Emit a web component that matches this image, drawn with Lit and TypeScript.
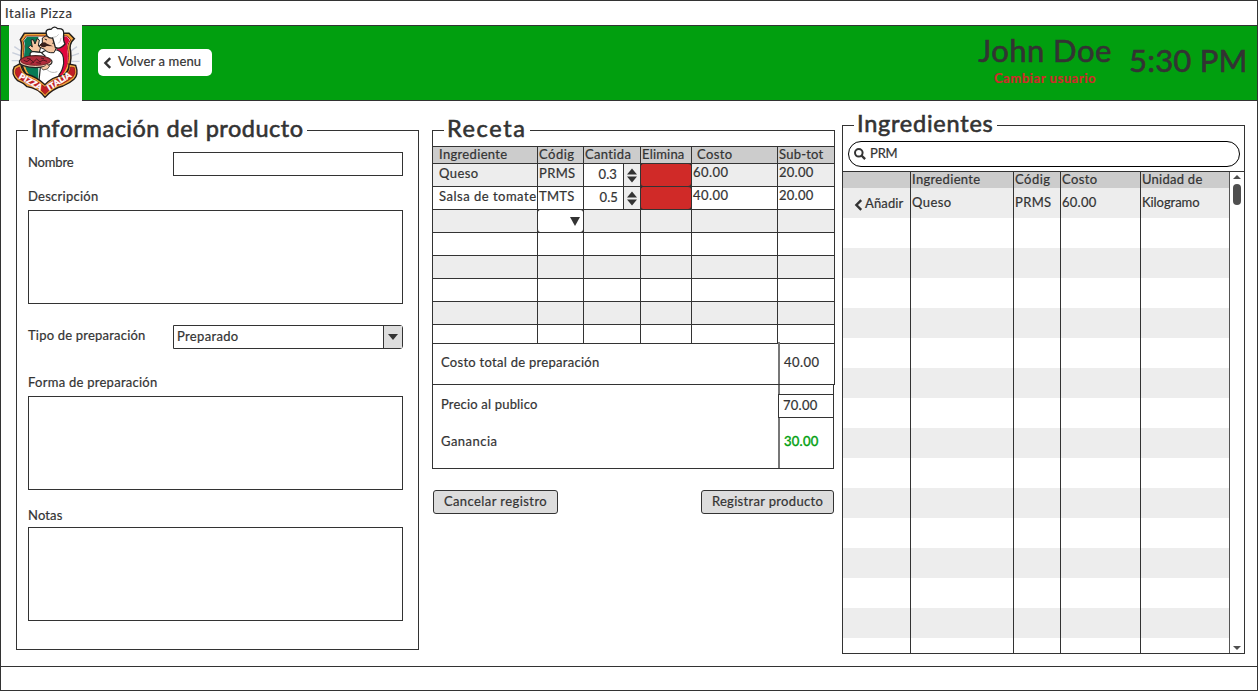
import { LitElement, html, css, svg, nothing } from "lit";
import { customElement } from "lit/decorators.js";

const FAMILY = `Lato, "Open Sans", sans-serif`;
const ctx = document.createElement("canvas").getContext("2d")!;

/** Text tracked so that it occupies the given width. */
function t(text: string, width: number, size = 13, weight = 400) {
  ctx.font = `${weight} ${size}px ${FAMILY}`;
  const gap = (width + 0.5 - ctx.measureText(text).width) / text.length;
  return html`<span class="t" style="letter-spacing:${gap.toFixed(3)}px">${text}</span>`;
}

const chevron = svg`<path d="M7.2 1.2 2.4 6l4.8 4.8" fill="none" stroke="#333" stroke-width="2.4"/>`;

@customElement("pizza-logo")
class PizzaLogo extends LitElement {
  static styles = css`
    :host { display: block; width: 73px; height: 76px; background: #f5f5f5; }
    svg { display: block; }
    text { font: 900 25px Lato, sans-serif; fill: #fff; stroke: #fff; stroke-width: 1; }
  `;
  render() {
    return html`<svg width="73" height="76" viewBox="12 9 219 228">
      <g stroke="#c9cfdb" stroke-width="4">
        <path d="M28 74l24 16M22 92l28 10M20 116h24M26 136l20-6M216 74l-20 14M222 94l-26 9M224 118h-24M218 138l-20-8"/>
      </g>
      <path d="M58 34H192L208 50Q190 66 197 90Q206 165 120 206Q41 165 49 90Q52 66 46 53Z" fill="#f0a53c" stroke="#26201c" stroke-width="4.5"/>
      <path d="M64 42H187L197 54Q183 70 190 92Q196 155 120 194Q50 155 56 92Q60 70 54 56Z" fill="#fff" stroke="#8b2417" stroke-width="3"/>
      <path d="M66 44H100V182Q50 150 58 92Q62 70 57 56Z" fill="#087a55"/>
      <path d="M160 44H186L194 55Q182 70 188 92Q194 150 146 184Z" fill="#e1063c"/>
      <path d="M110 92Q126 80 156 84Q178 90 176 124Q172 148 162 158L156 196L120 207L100 196L106 136Z" fill="#fff" stroke="#222" stroke-width="3.5"/>
      <path d="M78 106Q70 92 83 88L108 91L120 102L94 110Z" fill="#fff" stroke="#222" stroke-width="3.5"/>
      <path d="M81 88L70 76L76 70L82 75L78 54L85 53L90 66L96 50L103 54L100 72L108 72L103 90Z" fill="#f6c8a3" stroke="#222" stroke-width="3"/>
      <path d="M112 48Q128 34 148 48L158 70L147 92Q126 94 119 82L103 75Q101 69 112 64Z" fill="#f4c49f" stroke="#222" stroke-width="3"/>
      <path d="M104 70Q114 54 126 65L144 73L125 72Q114 80 104 70Z" fill="#3b211b"/>
      <path d="M119 51l7 3M142 64q7-4 7 5" stroke="#222" stroke-width="3" fill="none"/>
      <path d="M126 42Q117 20 138 22Q148 10 158 20Q179 18 176 38Q174 55 180 66Q164 84 151 76L143 48Q133 50 126 42Z" fill="#fff" stroke="#222" stroke-width="4"/>
      <path d="M144 46q12 0 17-9M160 64q7-4 8-16" stroke="#c8c8c8" stroke-width="3" fill="none"/>
      <path d="M28 134Q16 156 38 176Q54 182 66 194Q98 198 120 226Q144 199 174 192Q194 184 207 172Q222 158 212 130L192 126Q194 150 174 160Q140 165 120 188Q96 165 64 156Q50 146 47 124Z" fill="#f0a53c" stroke="#241b19" stroke-width="4"/>
      <path d="M33 140Q26 158 43 170Q60 180 74 188Q103 194 120 217Q140 194 172 185Q190 176 203 166Q214 154 208 137L197 135Q194 156 174 167Q140 172 120 196Q94 172 62 162Q47 154 43 135Z" fill="#c11f25" stroke="#8a1717" stroke-width="2"/>
      <ellipse cx="92" cy="119" rx="49" ry="18" fill="#e9c9b0" stroke="#222" stroke-width="3.5"/>
      <ellipse cx="92" cy="116" rx="45" ry="14" fill="#b02c3c" stroke="#7b2225" stroke-width="3"/>
      <path d="M56 115l10 4 9-7 10 8 10-9 10 9 9-6 12 4M66 109l11 2M94 122l14 2M77 124l10-3M108 108l9 2" fill="none" stroke="#53151d" stroke-width="3"/>
      <path d="M108 136q12-2 17-10l9 6q-4 12-20 12z" fill="#f6c8a3" stroke="#222" stroke-width="2"/>
      <path d="M126 143q14 13 31 6" fill="none" stroke="#bbb" stroke-width="3"/>
      <text transform="translate(40 168) rotate(30)" textLength="76" lengthAdjust="spacingAndGlyphs">PIZZA</text>
      <text transform="translate(133 206) rotate(-32)" textLength="80" lengthAdjust="spacingAndGlyphs">ITALIA</text>
    </svg>`;
  }
}

@customElement("app-root")
class AppRoot extends LitElement {
  static styles = css`
    :host { display: block; width: 1258px; height: 691px; font: 13px/16px Lato, "Open Sans", sans-serif; color: #333; }
    * { box-sizing: border-box; }
    .t { white-space: pre; -webkit-text-stroke: 0.2px currentColor; }
    svg { display: block; flex: none; }
    .frame { display: flex; flex-direction: column; height: 691px; border: 1px solid #333; background: #fff; }
    .titlebar { height: 24px; padding: 4px 0 0 4px; }
    .header { display: flex; align-items: flex-start; height: 76px; padding-left: 8px; background: #019f0f; border: solid #333; border-width: 1px 0; }
    .logo { margin-top: -1px; }
    .back { display: flex; align-items: center; gap: 6px; width: 114px; height: 27px; margin: 23px 0 0 16px; padding: 0 0 3px 5px; background: #fff; border-radius: 5px; }
    .back svg { margin-top: 3px; }
    .user { display: flex; flex-direction: column; align-items: center; margin: 6px 0 0 auto; width: 134px; }
    .big { font-size: 31px; line-height: 36px; }
    .big .t, .legend .t { -webkit-text-stroke-width: 0.6px; }
    .switch { margin-top: 2px; color: #d02a2a; font-weight: 700; }
    .clock { margin: 16px 10px 0 17px; width: 118px; }
    .main { display: flex; align-items: flex-start; height: 565px; padding-left: 15px; }
    .footer { height: 24px; border-top: 1px solid #333; }

    .panel { width: 403px; flex: none; display: flex; flex-direction: column; }
    .form { margin-top: 14px; height: 535px; }
    .recipe { margin: 14px 0 0 13px; }
    .stock { margin: 9px 0 0 7px; height: 544px; }
    .legend { display: flex; align-items: flex-end; height: 30px; flex: none; font-size: 23.5px; line-height: 30px; }
    .legend .t { padding: 0 3px 2px; }
    .corner { height: 15px; width: 12px; border: solid #333; border-width: 1px 0 0 1px; }
    .corner.end { flex: 1; border-width: 1px 1px 0 0; }
    .stock .legend { height: 31px; }
    .stock .legend .t { padding-bottom: 3px; }
    .stock .corner { height: 16px; }
    .body { flex: 1; border: solid #333; border-width: 0 1px 1px; }
    .form .body { padding: 7px 15px 0 11px; }

    .row { display: flex; justify-content: space-between; height: 24px; }
    .row .label { padding-top: 2px; }
    .label { height: 16px; }
    .input { width: 230px; height: 24px; border: 1px solid #333; }
    .area { height: 94px; border: 1px solid #333; }
    .select { display: flex; justify-content: space-between; padding: 2px 0 0 3px; border-radius: 0 3px 3px 0; }
    .arrow { display: flex; align-items: center; justify-content: center; width: 19px; height: 22px; margin-top: -2px; background: #ddd; border-left: 1px solid #333; }
    .g4 { margin-top: 4px; } .g6 { margin-top: 6px; } .g12 { margin-top: 12px; }
    .g17 { margin-top: 17px; } .g21 { margin-top: 21px; } .g25 { margin-top: 25px; }

    .spacer { height: 1px; border: solid #333; border-width: 0 1px; }
    .grid { display: grid; grid-template-columns: 105px 46px 57px 51px 86px 57px; grid-template-rows: 17px repeat(7, 23px) 19px; border-right: 1px solid #333; width: 403px; background: #333; }
    .cell { border: solid #333; border-width: 1px 0 0 1px; padding: 1px 0 0 1px; overflow: hidden; background: #fff; }
    .cell.num { padding-top: 0; }
    .cell.first { padding-left: 6px; }
    .cell.pad { padding-left: 5px; }
    .cell.head { background: #ccc; line-height: 14px; padding-top: 0; }
    .cell.odd { background: #ededed; }
    .cell.pick { display: flex; justify-content: flex-end; align-items: center; padding: 0 3px 0 0; background: #fff; border-radius: 3px; }
    .cell.delete { background: #d02a28; border-radius: 3px; }
    .cell.qty { display: flex; justify-content: flex-end; padding: 0; background: #fff; }
    .qty .t { padding: 2px 6px 0 0; }
    .cell.qty.second .t { padding: 2px 5px 0 0; }
    .spin { display: flex; align-items: center; justify-content: center; width: 17px; background: #ededed; border-left: 1px solid #333; }

    .total { display: flex; width: 403px; height: 42px; border: 1px solid #333; }
    .total .name { width: 345px; padding: 10px 0 0 8px; }
    .total .value { flex: 1; margin-top: -2px; padding: 12px 0 0 4px; border-left: 2px solid #777; }
    .profit { display: flex; width: 402px; height: 84px; border: solid #333; border-width: 0 1px 1px; }
    .profit .names { display: flex; flex-direction: column; gap: 21px; width: 345px; padding: 11px 0 0 8px; }
    .profit .values { flex: 1; border-left: 2px solid #777; padding-top: 9px; }
    .price { height: 24px; margin: 0 -1px 0 -2px; padding: 2px 0 0 4px; border: 1px solid #333; background: #fff; }
    .gain { padding: 15px 0 0 4px; color: #019f0f; }
    .gain .t { -webkit-text-stroke-width: 0.4px; }
    .actions { display: flex; justify-content: space-between; width: 401px; margin: 21px 0 0 1px; }
    .button { display: flex; justify-content: center; width: 125px; height: 24px; padding-top: 2px; border: 1px solid #333; border-radius: 3px; background: #ddd; }
    .button.wide { width: 133px; }

    .stock .body { display: flex; flex-direction: column; overflow: hidden; }
    .search { display: flex; gap: 4px; height: 26px; flex: none; margin: 0 4px 4px 5px; padding: 3px 0 0 5px; border: 1.4px solid #000; border-radius: 13px; }
    .search svg { margin-top: 3px; }
    .listing { display: flex; flex: 1; min-height: 0; border-top: 1px solid #333; }
    .rows { width: 386px; overflow: hidden; }
    .line { display: grid; grid-template-columns: 67px 103px 47px 80px 89px; height: 30px; }
    .line.odd { background: #ededed; }
    .line.head { background: #ccc; height: 16px; line-height: 14px; }
    .line .c { border-left: 1px solid #333; padding: 6px 0 0 1px; }
    .line.head .c { padding-top: 0; }
    .line .c.act { display: flex; border: 0; gap: 2px; padding: 7px 0 0 11px; }
    .act svg { margin-top: 4px; }
    .scroll { display: flex; flex-direction: column; align-items: center; flex: 1; border-left: 1px solid #555; padding: 3px 0; }
    .thumb { width: 8px; height: 21px; margin: 5px 0 auto; border-radius: 4px; background: #4f4f4f; }
  `;

  private legend(text: string, width: number) {
    return html`<div class="legend"><div class="corner"></div>${t(text, width, 23.5)}<div class="corner end"></div></div>`;
  }

  private quantity(value: string, second = false) {
    return html`<div class="cell qty ${second ? "second" : ""}">${t(value, 18)}
      <div class="spin"><svg width="10" height="15" viewBox="0 0 10 15"><path d="M0 6.5 5 .5l5 6zM0 8.5l5 6 5-6z" fill="#333"/></svg></div></div>`;
  }

  private recipe() {
    const blanks = [0, 1, 2, 3, 4, 5];
    return html`<div class="grid">
      <div class="cell head first">${t("Ingrediente", 68)}</div>
      <div class="cell head">${t("Códig", 35)}</div>
      <div class="cell head">${t("Cantida", 46)}</div>
      <div class="cell head">${t("Elimina", 42)}</div>
      <div class="cell head pad">${t("Costo", 35)}</div>
      <div class="cell head">${t("Sub-tot", 44)}</div>
      <div class="cell odd first">${t("Queso", 39)}</div>
      <div class="cell odd">${t("PRMS", 36)}</div>
      ${this.quantity("0.3")}
      <div class="cell delete"></div>
      <div class="cell odd num">${t("60.00", 35)}</div>
      <div class="cell odd num">${t("20.00", 34)}</div>
      <div class="cell first">${t("Salsa de tomate", 97)}</div>
      <div class="cell">${t("TMTS", 35)}</div>
      ${this.quantity("0.5", true)}
      <div class="cell delete"></div>
      <div class="cell num">${t("40.00", 35)}</div>
      <div class="cell num">${t("20.00", 34)}</div>
      ${blanks.map((r) => blanks.map((c) => r === 0 && c === 1
        ? html`<div class="cell pick"><svg width="10" height="9" viewBox="0 0 10 9"><path d="M0 0h10L5 9z" fill="#333"/></svg></div>`
        : html`<div class="cell ${r % 2 ? "" : "odd"}"></div>`))}
    </div>`;
  }

  private stockRow(i: number) {
    const filled = i === 0;
    return html`<div class="line ${i % 2 ? "" : "odd"}">
      <div class="c act">${filled ? html`<svg width="9" height="12" viewBox="0 0 9 12">${chevron}</svg>${t("Añadir", 38)}` : nothing}</div>
      <div class="c">${filled ? t("Queso", 39) : nothing}</div>
      <div class="c">${filled ? t("PRMS", 36) : nothing}</div>
      <div class="c">${filled ? t("60.00", 34) : nothing}</div>
      <div class="c">${filled ? t("Kilogramo", 57) : nothing}</div>
    </div>`;
  }

  render() {
    return html`<div class="frame">
      <div class="titlebar">${t("Italia Pizza", 67)}</div>
      <div class="header">
        <pizza-logo class="logo"></pizza-logo>
        <div class="back"><svg width="9" height="12" viewBox="0 0 9 12">${chevron}</svg>${t("Volver a menu", 83)}</div>
        <div class="user"><div class="big">${t("John Doe", 133, 31)}</div><div class="switch">${t("Cambiar usuario", 102, 13, 700)}</div></div>
        <div class="clock big">${t("5:30 PM", 118, 31)}</div>
      </div>
      <div class="main">
        <section class="panel form">
          ${this.legend("Información del producto", 272)}
          <div class="body">
            <div class="row"><div class="label">${t("Nombre", 45)}</div><div class="input"></div></div>
            <div class="label g12">${t("Descripción", 70)}</div>
            <div class="area g6"></div>
            <div class="row g21"><div class="label">${t("Tipo de preparación", 117)}</div>
              <div class="input select">${t("Preparado", 61)}<div class="arrow"><svg width="10" height="6" viewBox="0 0 10 6"><path d="M0 0h10L5 6z" fill="#333"/></svg></div></div></div>
            <div class="label g25">${t("Forma de preparación", 129)}</div>
            <div class="area g6"></div>
            <div class="label g17">${t("Notas", 34)}</div>
            <div class="area g4"></div>
          </div>
        </section>
        <section class="panel recipe">
          ${this.legend("Receta", 79)}
          <div class="spacer"></div>
          ${this.recipe()}
          <div class="total"><div class="name">${t("Costo total de preparación", 158)}</div><div class="value">${t("40.00", 35)}</div></div>
          <div class="profit">
            <div class="names"><div>${t("Precio al publico", 96)}</div><div>${t("Ganancia", 56)}</div></div>
            <div class="values"><div class="price">${t("70.00", 34)}</div><div class="gain">${t("30.00", 34)}</div></div>
          </div>
          <div class="actions"><div class="button">${t("Cancelar registro", 103)}</div><div class="button wide">${t("Registrar producto", 111)}</div></div>
        </section>
        <section class="panel stock">
          ${this.legend("Ingredientes", 136)}
          <div class="body">
            <div class="search"><svg width="12" height="12" viewBox="0 0 12 12"><circle cx="4.8" cy="4.8" r="3.8" fill="none" stroke="#333" stroke-width="2"/><path d="M7.5 7.5l3.6 3.6" stroke="#333" stroke-width="2.4"/></svg>${t("PRM", 27)}</div>
            <div class="listing">
              <div class="rows">
                <div class="line head"><div></div><div class="c">${t("Ingrediente", 68)}</div><div class="c">${t("Códig", 35)}</div><div class="c">${t("Costo", 35)}</div><div class="c">${t("Unidad de", 60)}</div></div>
                ${Array.from({ length: 16 }, (_, i) => this.stockRow(i))}
              </div>
              <div class="scroll"><svg width="8" height="4" viewBox="0 0 8 4"><path d="M0 4 4 0l4 4z" fill="#4f4f4f"/></svg><div class="thumb"></div><svg width="8" height="4" viewBox="0 0 8 4"><path d="M0 0h8L4 4z" fill="#4f4f4f"/></svg></div>
            </div>
          </div>
        </section>
      </div>
      <div class="footer"></div>
    </div>`;
  }
}
